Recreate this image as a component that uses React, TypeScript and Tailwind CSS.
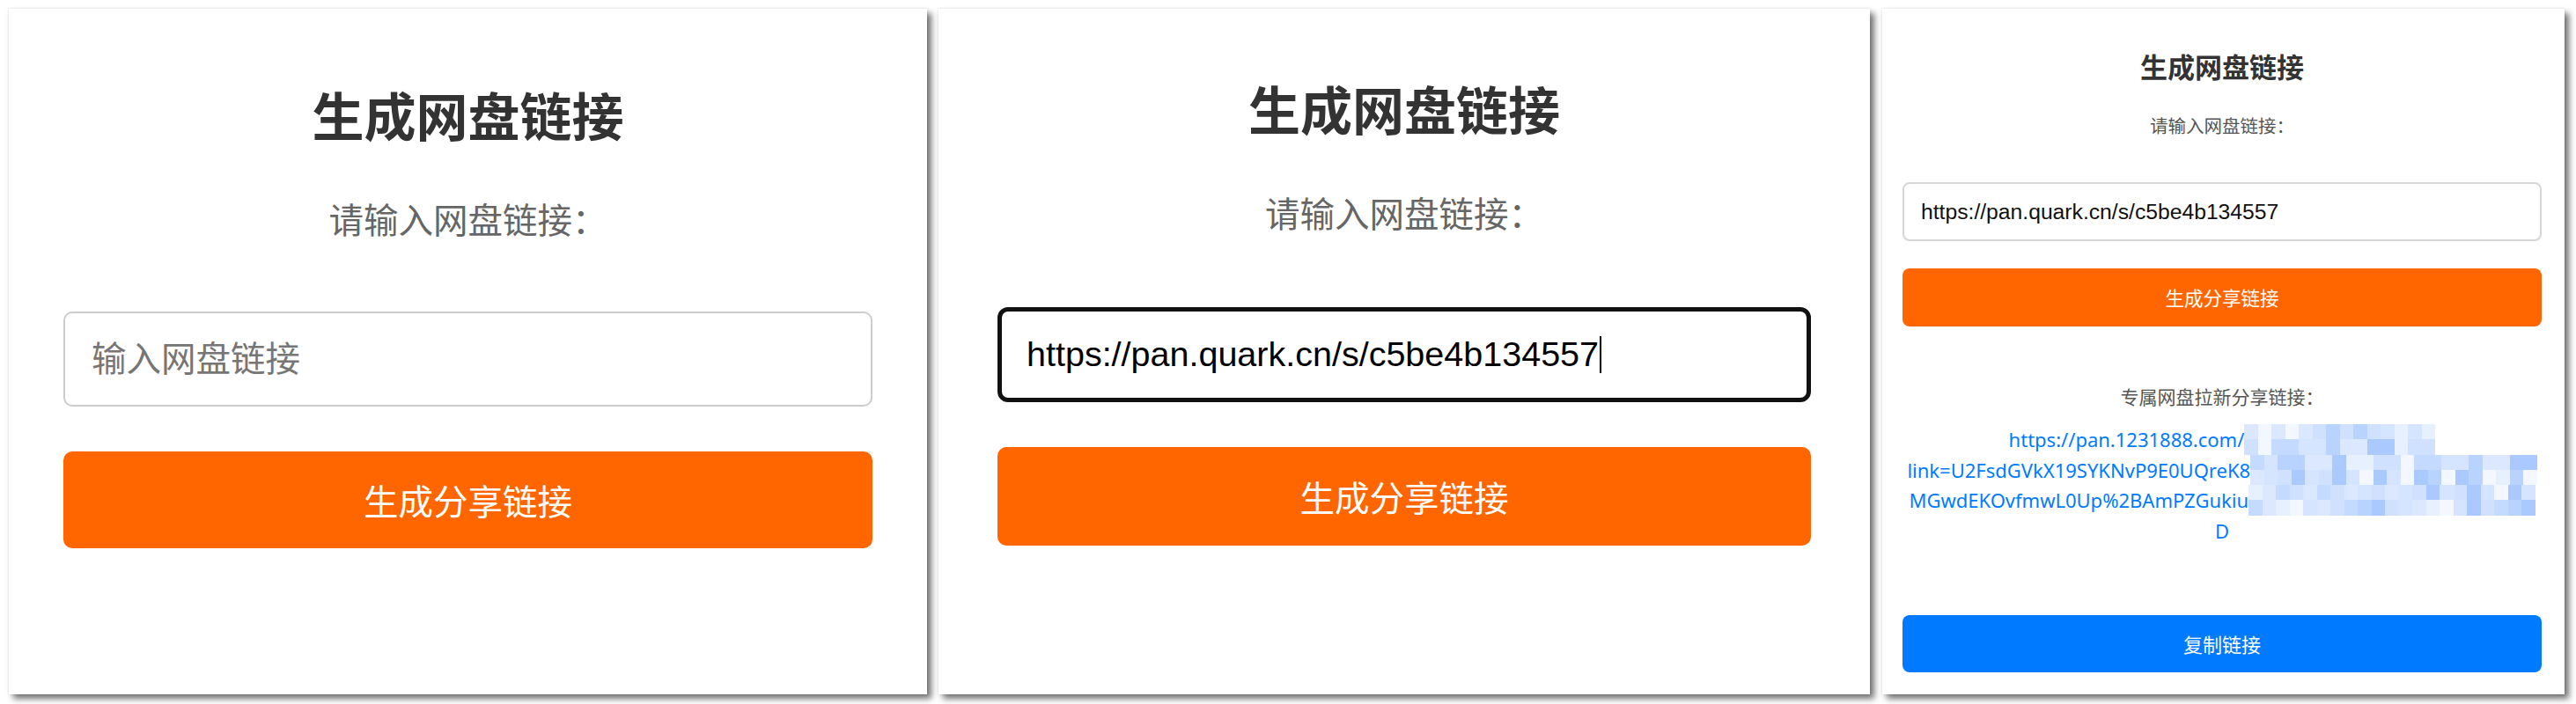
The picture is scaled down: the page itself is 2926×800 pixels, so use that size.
const cjk = "font-['Noto_Sans_CJK_SC',sans-serif]";
const latin = "font-['Liberation_Sans','Noto_Sans_CJK_SC',sans-serif]";
const panelShadow =
  "bg-white h-[779px] shrink-0 flex flex-col shadow-[5px_5px_7px_rgba(0,0,0,0.55),0_0_3px_rgba(0,0,0,0.12)]";

const tones = [
  "bg-[#cfe1ff]",
  "bg-[#dbe8ff]",
  "bg-[#c4daff]",
  "bg-[#e7f0ff]",
  "bg-[#b9d3ff]",
  "bg-[#f3f7ff]",
  "bg-[#a9c9ff]",
  "bg-[#d5e5ff]",
];

// pixelated blur over the private part of the link
const Mosaic = ({ cols, seed }: { cols: number; seed: number }) => {
  const cells = [];
  for (let r = 0; r < 2; r++) {
    for (let c = 0; c < cols; c++) {
      const i = (r * 7 + c * 3 + ((r + seed) * c) % 5 + seed) % tones.length;
      cells.push(<span key={r + "-" + c} className={"block w-[15.5px] h-[17.25px] " + tones[i]} />);
    }
  }
  return (
    <span
      className="inline-grid"
      style={{ gridTemplateColumns: `repeat(${cols}, 15.5px)` }}
    >
      {cells}
    </span>
  );
};

const FirstPanel = () => (
  <div className={panelShadow + " w-[1043px] px-[62px] pt-[84px]"}>
    <h2 className={cjk + " text-center text-[59px] leading-[72px] font-bold text-[#333]"}>
      生成网盘链接
    </h2>
    <p className={cjk + " mt-[58px] text-center text-[39.5px] leading-[48px] text-[#666]"}>
      请输入网盘链接：
    </p>
    <input
      placeholder="输入网盘链接"
      className={
        latin +
        " mt-[82px] w-full h-[108px] border-2 border-[#cccccc] rounded-[10px] pl-[30px] text-[39.5px] outline-none placeholder:text-[#767676]"
      }
    />
    <button
      className={cjk + " mt-[51px] w-full h-[110px] rounded-[10px] bg-[#ff6600] text-white text-[39.5px]"}
    >
      生成分享链接
    </button>
  </div>
);

const SecondPanel = () => (
  <div className={panelShadow + " w-[1058px] px-[67px] pt-[77px]"}>
    <h2 className={cjk + " text-center text-[59px] leading-[72px] font-bold text-[#333]"}>
      生成网盘链接
    </h2>
    <p className={cjk + " mt-[58px] text-center text-[39.5px] leading-[48px] text-[#666]"}>
      请输入网盘链接：
    </p>
    <div
      className={
        latin +
        " mt-[84px] w-full h-[108px] border-[5px] border-[#111] rounded-[12px] pl-[28px] flex items-center text-[39.5px] text-black"
      }
    >
      <span>https://pan.quark.cn/s/c5be4b134557</span>
      <span className="w-[2px] h-[42px] bg-black ml-[1px]" />
    </div>
    <button
      className={cjk + " mt-[51px] w-full h-[112px] rounded-[10px] bg-[#ff6600] text-white text-[39.5px]"}
    >
      生成分享链接
    </button>
  </div>
);

const ThirdPanel = () => (
  <div className={panelShadow + " w-[775px] pl-[23px] pr-[26px] pt-[45px] ml-[1px]"}>
    <h2 className={cjk + " text-center text-[31px] leading-[40px] font-bold text-[#333]"}>
      生成网盘链接
    </h2>
    <p className={cjk + " mt-[33px] text-center text-[20.5px] leading-[28px] text-[#555]"}>
      请输入网盘链接：
    </p>
    <input
      readOnly
      value="https://pan.quark.cn/s/c5be4b134557"
      className={
        latin +
        " mt-[51px] w-full h-[67px] border-2 border-[#d6d6d6] rounded-[8px] pl-[19px] text-[24.7px] text-[#111] outline-none"
      }
    />
    <button
      className={cjk + " mt-[31px] w-full h-[66px] rounded-[8px] bg-[#ff6600] text-white text-[21.5px]"}
    >
      生成分享链接
    </button>
    <p className={cjk + " mt-[65px] text-center text-[21px] leading-[28px] text-[#555]"}>
      专属网盘拉新分享链接：
    </p>
    <div className="mt-[18px] flex flex-col items-center text-[22px] leading-[34.5px] text-[#007bff] font-['Noto_Sans','Noto_Sans_CJK_SC',sans-serif]">
      <div className="flex items-center">
        <span>https://pan.1231888.com/</span>
        <Mosaic cols={14} seed={1} />
      </div>
      <div className="flex items-center">
        <span>link=U2FsdGVkX19SYKNvP9E0UQreK8</span>
        <Mosaic cols={21} seed={2} />
      </div>
      <div className="flex items-center">
        <span>MGwdEKOvfmwL0Up%2BAmPZGukiu</span>
        <Mosaic cols={21} seed={3} />
      </div>
      <div>D</div>
    </div>
    <button
      className={cjk + " mt-[79px] w-full h-[65px] rounded-[8px] bg-[#007bff] text-white text-[22px]"}
    >
      复制链接
    </button>
  </div>
);

const App = () => {
  return (
    <div className="w-[2926px] h-[800px] bg-white flex items-start pl-[10px] pt-[10px] gap-[13px]">
      <FirstPanel />
      <SecondPanel />
      <ThirdPanel />
    </div>
  );
};

export default App;
